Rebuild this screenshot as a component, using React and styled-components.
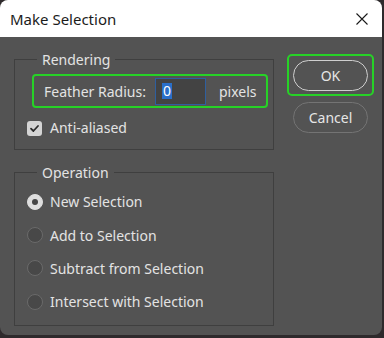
import React from "react";
import styled, { createGlobalStyle } from "styled-components";

const Global = createGlobalStyle`
  html, body { margin: 0; padding: 0; background: #2e2a2c; }
  body { width: 384px; height: 338px; overflow: hidden; font-family: "Noto Sans", "Open Sans", sans-serif; }
`;

const Dialog = styled.div`
  width: 382px;
  height: 335px;
  border-radius: 8px;
  overflow: hidden;
  background: #535353;
  display: flex;
  flex-direction: column;
`;

const TitleBar = styled.div`
  height: 37px;
  flex: none;
  background: #ffffff;
  display: flex;
  align-items: center;
  justify-content: space-between;
  padding: 0 14px 0 10px;
  box-sizing: border-box;
`;

const Title = styled.div`
  font-size: 15px;
  color: #1b1b1b;
  line-height: 20px;
`;

const CloseIcon = styled.svg`
  width: 12px;
  height: 12px;
  display: block;
`;

const Body = styled.div`
  display: flex;
  gap: 13px;
  padding: 13px 8px 0 14px;
  color: #e3e3e3;
  font-size: 14px;
`;

const LeftCol = styled.div`
  width: 260px;
  display: flex;
  flex-direction: column;
  gap: 13px;
`;

const Group = styled.fieldset`
  margin: 0;
  padding: ${(p) => p.$pt}px 0 ${(p) => p.$pb}px 0;
  border: 1px solid #3f3f3f;
  min-inline-size: 0;
  display: flex;
  flex-direction: column;
  align-items: flex-start;
`;

const Legend = styled.legend`
  margin-left: 22px;
  padding: 0 5px;
  line-height: 19px;
  font-size: 14px;
  color: #e3e3e3;
`;

const Highlight = styled.div`
  width: 236px;
  height: 34px;
  margin-left: 17px;
  box-sizing: border-box;
  border: 2px solid #27d227;
  border-radius: 4px;
  display: flex;
  align-items: center;
  padding-left: 10px;
`;

const Label = styled.span`
  width: 111px;
  white-space: nowrap;
`;

const Input = styled.div`
  width: 51px;
  height: 27px;
  box-sizing: border-box;
  background: #434343;
  border: 1px solid #2f5f9e;
  display: flex;
  align-items: center;
  padding-left: 6px;
`;

const Selected = styled.span`
  background: #2a6fc9;
  color: #fff;
  line-height: 16px;
  padding: 0 1px;
`;

const Unit = styled.span`
  margin-left: 13px;
`;

const CheckRow = styled.label`
  display: flex;
  align-items: center;
  gap: 8px;
  margin: 12px 0 0 12px;
  line-height: 16px;
`;

const CheckBox = styled.span`
  width: 15px;
  height: 15px;
  border-radius: 3px;
  background: #d4d4d4;
  display: flex;
  align-items: center;
  justify-content: center;
`;

const RadioRow = styled.label`
  height: 33.4px;
  display: flex;
  align-items: center;
  gap: 7px;
  margin-left: 12px;
  white-space: nowrap;
`;

const Radio = styled.span`
  width: 16px;
  height: 16px;
  box-sizing: border-box;
  border-radius: 50%;
  background: ${(p) => (p.$on ? "#dedede" : "#484848")};
  border: 1px solid ${(p) => (p.$on ? "#dedede" : "#6a6a6a")};
  display: flex;
  align-items: center;
  justify-content: center;
  &::after {
    content: "";
    width: 6px;
    height: 6px;
    border-radius: 50%;
    background: #454545;
    display: ${(p) => (p.$on ? "block" : "none")};
  }
`;

const RightCol = styled.div`
  width: 87px;
  padding-top: 4px;
  display: flex;
  flex-direction: column;
  align-items: center;
`;

const FocusRing = styled.div`
  width: 87px;
  height: 42px;
  box-sizing: border-box;
  border: 2px solid #27d227;
  border-radius: 5px;
  display: flex;
  align-items: center;
  justify-content: center;
`;

const Button = styled.button`
  width: 75px;
  height: 31px;
  box-sizing: border-box;
  border-radius: 16px;
  border: 1px solid ${(p) => (p.$primary ? "#cfcfcf" : "#747474")};
  background: #535353;
  color: #e6e6e6;
  font-family: inherit;
  font-size: 14px;
  padding: 0;
  margin-top: ${(p) => p.$mt || 0}px;
`;

const ops = [
  "New Selection",
  "Add to Selection",
  "Subtract from Selection",
  "Intersect with Selection",
];

export default function App() {
  return (
    <>
      <Global />
      <Dialog>
        <TitleBar>
          <Title>Make Selection</Title>
          <CloseIcon viewBox="0 0 12 12">
            <path d="M0.5 0.5 L11.5 11.5 M11.5 0.5 L0.5 11.5" stroke="#1a1a1a" strokeWidth="1.1" />
          </CloseIcon>
        </TitleBar>
        <Body>
          <LeftCol>
            <Group $pt={5} $pb={13}>
              <Legend>Rendering</Legend>
              <Highlight>
                <Label>Feather Radius:</Label>
                <Input>
                  <Selected>0</Selected>
                </Input>
                <Unit>pixels</Unit>
              </Highlight>
              <CheckRow>
                <CheckBox>
                  <svg width="11" height="11" viewBox="0 0 11 11">
                    <path d="M2 5.6 L4.4 8 L9 3" fill="none" stroke="#2b2b2b" strokeWidth="1.8" strokeLinecap="round" strokeLinejoin="round" />
                  </svg>
                </CheckBox>
                Anti-aliased
              </CheckRow>
            </Group>
            <Group $pt={3} $pb={6}>
              <Legend>Operation</Legend>
              {ops.map((o, i) => (
                <RadioRow key={o}>
                  <Radio $on={i === 0} />
                  {o}
                </RadioRow>
              ))}
            </Group>
          </LeftCol>
          <RightCol>
            <FocusRing>
              <Button $primary>OK</Button>
            </FocusRing>
            <Button $mt={6}>Cancel</Button>
          </RightCol>
        </Body>
      </Dialog>
    </>
  );
}
